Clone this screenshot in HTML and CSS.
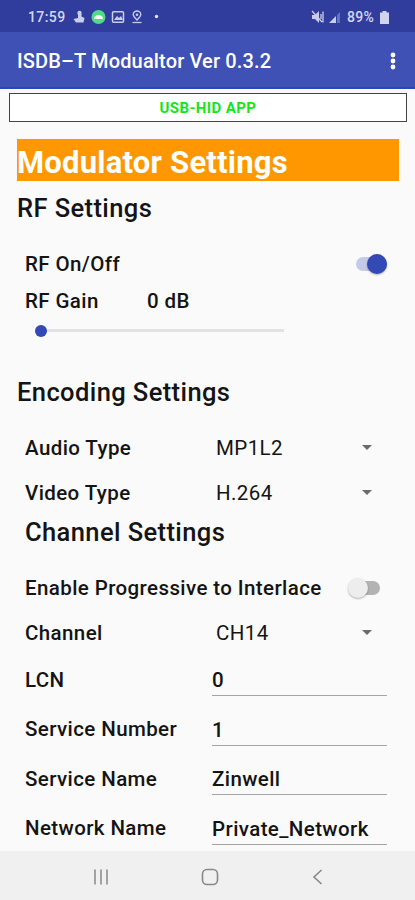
FILE: index.html
```html
<!DOCTYPE html>
<html lang="en">
<head>
  <meta charset="UTF-8" />
  <meta name="viewport" content="width=device-width, initial-scale=1.0"/>
  <title>ISDB–T Modualtor</title>
  <link rel="stylesheet" href="styles.css">
</head>
<body>
  <div class="status-bar">
    <span class="clock">17:59</span>
    <svg class="status-left" width="90" height="16" viewBox="0 0 90 16">
      <g fill="#c9cdec">
        <circle cx="7.500" cy="4" r="2.200"/>
        <path d="M6 5h3.500v2.500l3 1.500-1 4.500H4L1.500 10 6 9z"/>
      </g>
      <circle cx="26.500" cy="8" r="7" fill="#4fdc86"/>
      <path d="M22 10a4.500 4 0 0 1 9 0z" fill="#fff"/>
      <rect x="40.500" y="2.800" width="11" height="10.500" rx="1" fill="none" stroke="#c9cdec" stroke-width="1.500"/>
      <path d="M42 11l3-4 2 2 2-2 2 4z" fill="#c9cdec"/>
      <g fill="none" stroke="#c9cdec" stroke-width="1.300">
        <path d="M65 11c-2-2-3.800-3.500-3.800-5.500a3.800 3.500 0 0 1 7.600 0c0 2-1.800 3.500-3.800 5.500z"/>
        <path d="M60.500 13.500h9"/>
      </g>
      <circle cx="65" cy="5.700" r="1.300" fill="#c9cdec"/>
      <circle cx="84.500" cy="7.500" r="1.700" fill="#e4e6f7"/>
    </svg>
    <svg class="status-right" width="30" height="14" viewBox="0 0 30 14">
      <path d="M1 5h3l4-4v12l-4-4H1z" fill="#c9cdec"/>
      <path d="M1 1l10 11M10 4v5M12 1.500v11" fill="none" stroke="#c9cdec" stroke-width="1.300"/>
      <path d="M18 13l7-7v7z" fill="#c9cdec"/>
      <path d="M26 5l3-3v11h-3z" fill="#6672bd"/>
    </svg>
    <span class="battery-text">89%</span>
    <svg class="battery" width="9" height="13" viewBox="0 0 9 13">
      <path d="M2.500 0h4v1.500H9V13H0V1.500h2.500z" fill="#d0d4ef"/>
    </svg>
  </div>

  <header class="app-bar">
    <h1>ISDB–T Modualtor Ver 0.3.2</h1>
    <svg width="6" height="18" viewBox="0 0 6 18" fill="#fff">
      <circle cx="3" cy="3" r="2.400"/>
      <circle cx="3" cy="9" r="2.400"/>
      <circle cx="3" cy="15" r="2.400"/>
    </svg>
  </header>

  <main>
    <div class="usb-state">USB-HID APP</div>

    <h2 class="banner"><span>Modulator Settings</span></h2>

    <h3 class="rf-title">RF Settings</h3>
    <div class="row">
      <label>RF On/Off</label>
      <span class="switch on"><i></i></span>
    </div>
    <div class="row gain">
      <label>RF Gain</label>
      <span>0 dB</span>
    </div>
    <div class="slider"><i></i></div>

    <h3 class="encoding-title">Encoding Settings</h3>
    <div class="row">
      <label>Audio Type</label>
      <div class="select">MP1L2</div>
    </div>
    <div class="row">
      <label>Video Type</label>
      <div class="select">H.264</div>
    </div>

    <h3 class="channel-title">Channel Settings</h3>
    <div class="row progressive">
      <label>Enable Progressive to Interlace</label>
      <span class="switch"><i></i></span>
    </div>
    <div class="row">
      <label>Channel</label>
      <div class="select">CH14</div>
    </div>
    <div class="row field">
      <label>LCN</label>
      <div class="value">0</div>
    </div>
    <div class="row field">
      <label>Service Number</label>
      <div class="value">1</div>
    </div>
    <div class="row field">
      <label>Service Name</label>
      <div class="value">Zinwell</div>
    </div>
    <div class="row field">
      <label>Network Name</label>
      <div class="value">Private_Network</div>
    </div>
  </main>

  <nav class="nav-bar">
    <svg width="18" height="18" viewBox="0 0 18 18" fill="none" stroke="#999" stroke-width="1.800">
      <path d="M3 1.500v15M9 1.500v15M15 1.500v15"/>
    </svg>
    <svg width="18" height="18" viewBox="0 0 18 18" fill="none" stroke="#888" stroke-width="1.600">
      <rect x="1.500" y="1.500" width="15" height="15" rx="4.500"/>
    </svg>
    <svg width="18" height="18" viewBox="0 0 18 18" fill="none" stroke="#888" stroke-width="1.600">
      <path d="M12.500 2L5 9l7.500 7"/>
    </svg>
  </nav>
</body>
</html>
```

FILE: styles.css
```css
* {
  box-sizing: border-box;
}
body {
  margin: 0;
  height: 900px;
  display: flex;
  flex-direction: column;
  overflow: hidden;
  background-color: #fafafa;
  color: #141414;
  font-family: Roboto, sans-serif;
  font-weight: 500;
}
h1, h2, h3 {
  margin: 0;
  font-weight: 500;
  white-space: nowrap;
}
.status-bar {
  flex: none;
  height: 32px;
  padding: 2px 26px 0 28px;
  display: flex;
  align-items: center;
  background-color: #303d9d;
  color: #d4d7f0;
  font-size: 14px;
}
.clock {
  width: 44px;
  letter-spacing: 0.4px;
}
.status-right {
  margin-left: auto;
  margin-right: 6px;
}
.battery-text {
  width: 33px;
  letter-spacing: 0.3px;
}
.app-bar {
  flex: none;
  height: 57px;
  padding: 0 19px 0 17px;
  display: flex;
  align-items: center;
  justify-content: space-between;
  background-color: #3f51b5;
  border-bottom: 2px solid #2749b4;
  color: #fff;
}
h1 {
  font-size: 20px;
  letter-spacing: 0.15px;
  padding-top: 3px;
}
.app-bar svg {
  margin-top: 3px;
}
main {
  flex: none;
  height: 762px;
  overflow: hidden;
}
.usb-state {
  height: 29px;
  margin: 4px 8px 0 9px;
  display: flex;
  align-items: center;
  justify-content: center;
  border: 1.500px solid #444;
  background-color: #fff;
  color: #16e51b;
  font-size: 15px;
  font-weight: 700;
  letter-spacing: 0.4px;
}
.banner {
  height: 42px;
  margin: 17px 16px 0 17px;
  background-color: #ff9800;
  color: #fff;
  font-size: 31px;
  font-weight: 700;
  line-height: 47px;
  letter-spacing: 0.22px;
}
h3 {
  padding-left: 17px;
  font-size: 25.500px;
  line-height: 34px;
  letter-spacing: 0.4px;
}
.rf-title {
  height: 60px;
  padding-top: 10px;
}
.encoding-title {
  height: 50px;
}
.channel-title {
  height: 50px;
  padding-left: 25px;
}
.row {
  height: 45px;
  padding: 0 28px 0 25px;
  display: flex;
  align-items: center;
  font-size: 20.500px;
  letter-spacing: 0.4px;
  white-space: nowrap;
}
.row label {
  width: 187px;
}
.gain {
  height: 29px;
}
.gain label {
  width: 122px;
}
.slider {
  height: 60px;
  width: 243px;
  margin-left: 41px;
  padding-top: 14px;
}
.slider::before {
  content: "";
  display: block;
  height: 3px;
  background-color: #e2e2e2;
}
.slider i {
  display: block;
  width: 12px;
  height: 12px;
  margin: -7px 0 0 -6px;
  border-radius: 50%;
  background-color: #3349b5;
  position: relative;
}
.switch {
  width: 31px;
  height: 14px;
  margin-left: auto;
  display: flex;
  align-items: center;
  background-color: #b3b3b3;
  border-radius: 7px;
}
.switch i {
  flex: none;
  width: 20px;
  height: 20px;
  margin-left: -1px;
  border-radius: 50%;
  background-color: #ededed;
  box-shadow: 0 1px 2px rgba(0, 0, 0, 0.3);
}
.switch.on {
  justify-content: flex-end;
  background-color: #c6cae9;
}
.switch.on i {
  background-color: #3349b5;
}
.progressive {
  padding-right: 35px;
}
.progressive label {
  width: auto;
}
.select {
  flex: 1;
  padding: 0 15px 0 4px;
  display: flex;
  align-items: center;
  justify-content: space-between;
  font-weight: 400;
}
.select::after {
  content: "";
  border: 5px solid transparent;
  border-top-color: #6b6b6b;
  border-bottom: 0;
}
.field {
  height: 49.500px;
}
.value {
  flex: 1;
  height: 33px;
  border-bottom: 1.500px solid #a5a5a5;
  line-height: 35px;
}
.nav-bar {
  flex: 1;
  padding: 2px 88px 0 92px;
  display: flex;
  align-items: center;
  justify-content: space-between;
  background-color: #f0f0f0;
}
```
